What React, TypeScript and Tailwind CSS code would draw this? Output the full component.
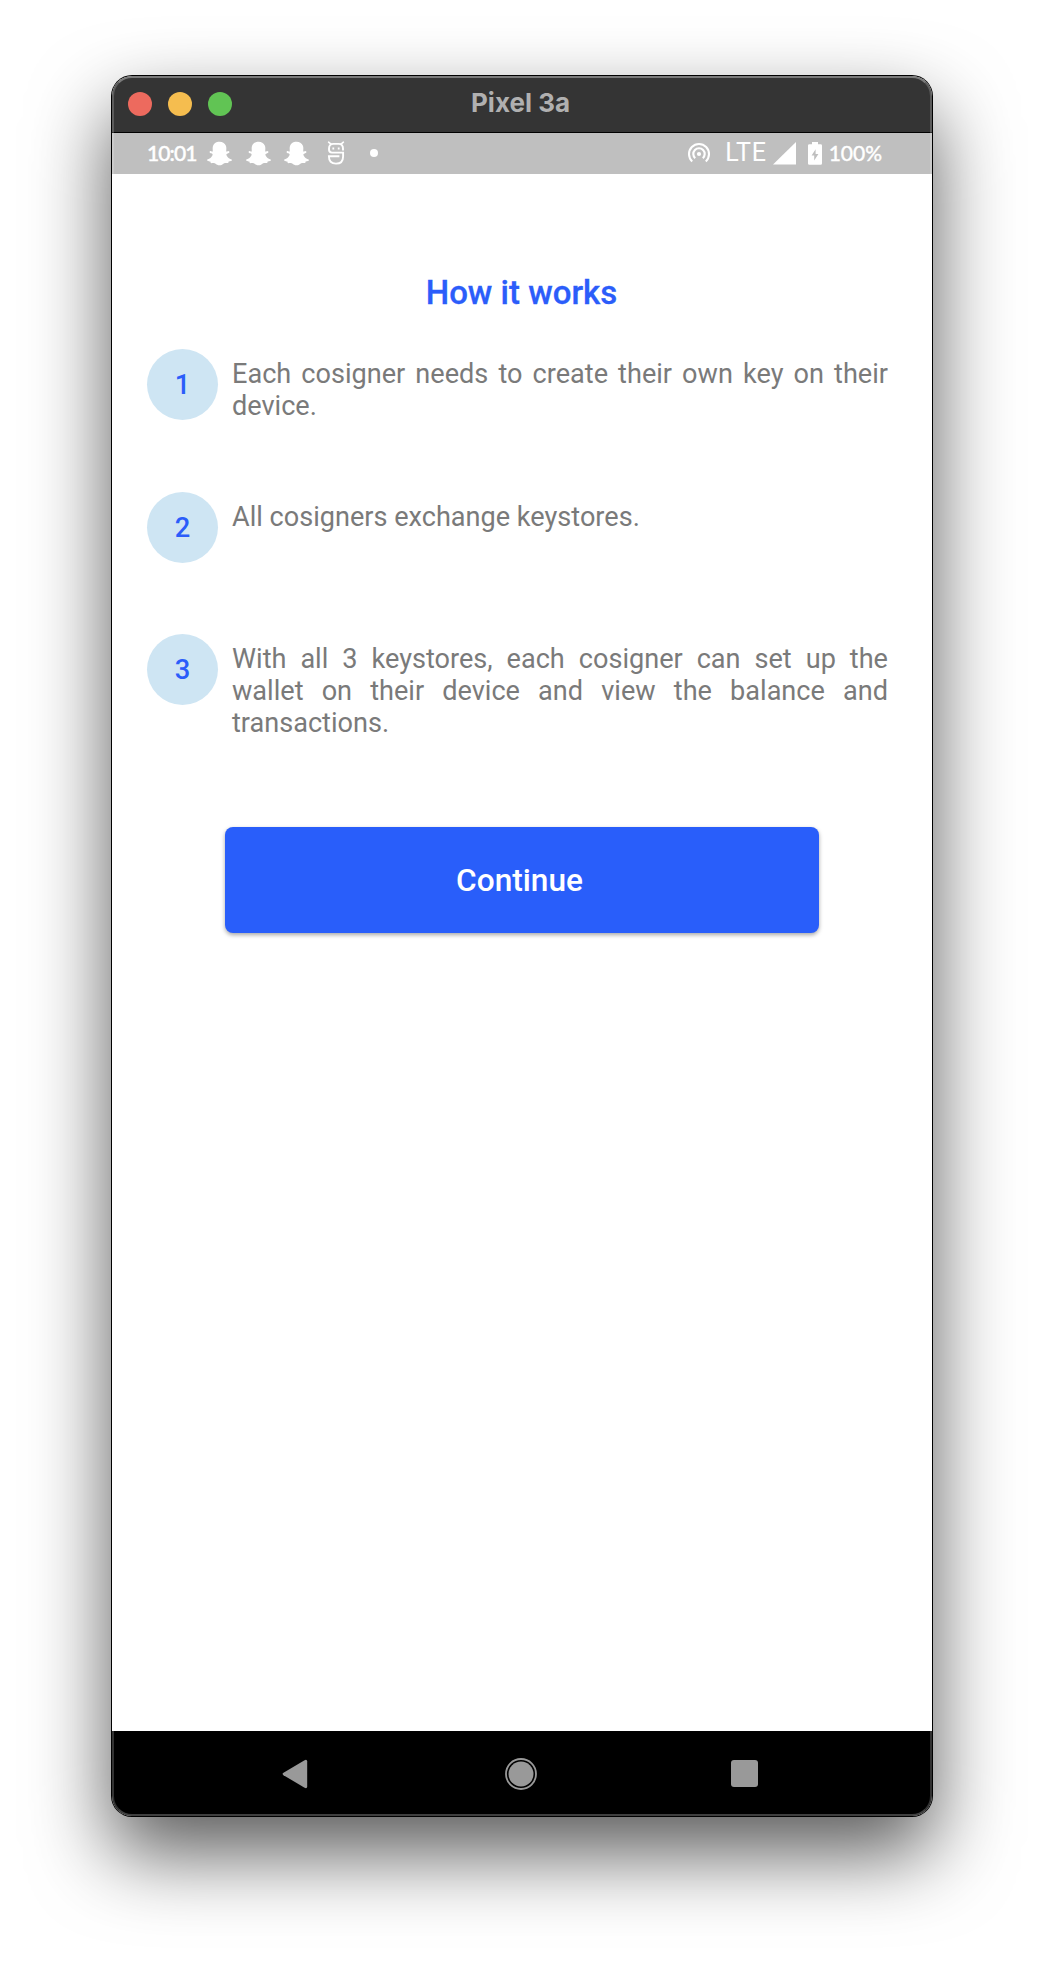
import type { ReactNode } from "react";
import { FaSnapchatGhost } from "react-icons/fa";

function MascotIcon() {
  return (
    <svg viewBox="0 0 18 24" className="h-6 w-[18px]" fill="none" stroke="white" strokeWidth="1.9">
      <path d="M1.6 1.2 4 3.2M16.4 1.2 14 3.2" strokeLinecap="round" strokeWidth="1.6" />
      <path d="M16 9.4V7.6Q16 2.9 11.6 2.9H6.4Q2 2.9 2 7.6V8.6Q2 11.6 5 11.6H16.1V15.4Q16.1 22.6 9 22.6Q1.9 22.6 1.9 15.2H12.4" />
      <path d="M6.3 6.6v2M11.7 6.6v2" strokeWidth="1.8" />
    </svg>
  );
}

function TetherIcon() {
  return (
    <svg viewBox="0 0 24 22" className="h-[22px] w-6" fill="none" stroke="white" strokeWidth="2.1">
      <path d="M5.2 19.4A10 10 0 1 1 18.8 19.4" />
      <path d="M8.2 16.2A5.7 5.7 0 1 1 15.8 16.2" />
      <circle cx="12" cy="12" r="2.1" fill="white" stroke="none" />
    </svg>
  );
}

function SignalIcon() {
  return (
    <svg viewBox="0 0 23 23" className="h-[23px] w-[23px]" fill="white">
      <path d="M23 0V22.5H0Z" />
    </svg>
  );
}

function BatteryIcon() {
  return (
    <svg viewBox="0 0 14 23" className="h-[23px] w-3.5" fill="white">
      <path
        fillRule="evenodd"
        d="M4 0H10V2.2H12.6Q14 2.2 14 3.6V21.4Q14 22.8 12.6 22.8H1.4Q0 22.8 0 21.4V3.6Q0 2.2 1.4 2.2H4ZM7.6 7.2 3.6 13.6H6.2V18.6L10.4 12H7.6Z"
      />
    </svg>
  );
}

function Step({ number, children, height }: { number: number; children: ReactNode; height: string }) {
  return (
    <li className={`flex items-start ${height}`}>
      <span className="flex size-[71px] shrink-0 items-center justify-center rounded-full bg-[#cee5f3] pt-0.5 text-[27.3px] font-medium text-[#2b5dfa]">
        {number}
      </span>
      <p className="ml-3.5 w-[656px] pt-[9px] text-justify text-[27.1px] leading-[32px] text-[#7a7a7a]">
        {children}
      </p>
    </li>
  );
}

export default function App() {
  return (
    <div className="h-[1964px] w-[1044px] overflow-hidden bg-white px-[111px] pt-[75px] font-['Roboto',sans-serif]">
      <div className="relative h-[1742px] w-[822px] rounded-[21px] bg-black p-px shadow-[0_36px_80px_rgba(0,0,0,0.65)]">
        <div className="flex h-full flex-col overflow-hidden rounded-[20px] bg-white">
          <header className="grid h-[57px] shrink-0 grid-cols-[1fr_auto_1fr] items-center border-b border-black bg-[#343434]">
            <div className="flex gap-4 pl-4">
              <span className="size-6 rounded-full bg-[#ed6a5e]" />
              <span className="size-6 rounded-full bg-[#f5bd4f]" />
              <span className="size-6 rounded-full bg-[#61c454]" />
            </div>
            <h1 className="pr-[3px] pb-1 font-['Inter',sans-serif] text-[26px] font-bold text-[#b0b0b0]">Pixel 3a</h1>
          </header>

          <div className="flex h-[41px] shrink-0 items-center bg-[#bfbfbf] pr-[50px] pb-px pl-[35px] font-['Lato',sans-serif] text-[21px] text-white">
            <span className="w-[50px] font-medium tracking-[-0.9px] whitespace-nowrap [-webkit-text-stroke:0.4px]">10:01</span>
            <div className="ml-[10px] flex items-center gap-[13.6px]">
              <FaSnapchatGhost size={25} />
              <FaSnapchatGhost size={25} />
              <FaSnapchatGhost size={25} />
            </div>
            <div className="ml-[18px] flex items-center gap-[25px]">
              <MascotIcon />
              <span className="size-2 rounded-full bg-white" />
            </div>
            <div className="ml-auto flex items-center">
              <TetherIcon />
              <span className="ml-3.5 font-['Roboto',sans-serif] text-[25px] tracking-[0.7px]">LTE</span>
              <span className="ml-[6px]"><SignalIcon /></span>
              <span className="ml-3"><BatteryIcon /></span>
              <span className="ml-[7px] [-webkit-text-stroke:0.4px]">100%</span>
            </div>
          </div>

          <main className="flex flex-1 flex-col pt-[99px]">
            <h2 className="pr-px text-center text-[33px] leading-[40px] font-medium text-[#2b5dfa] [-webkit-text-stroke:0.3px]">How it works</h2>
            <ol className="mt-[35.5px] pl-[35px]">
              <Step number={1} height="h-[143.5px]">Each cosigner needs to create their own key on their device.</Step>
              <Step number={2} height="h-[142px]">All cosigners exchange keystores.</Step>
              <Step number={3} height="h-[193px]">
                With all 3 keystores, each cosigner can set up the wallet on their device and view the balance and transactions.
              </Step>
            </ol>
            <button className="ml-[113px] h-[106px] w-[594px] rounded-lg bg-[#295efa] pt-0.5 pr-[5px] text-[31.6px] font-medium text-white shadow-[0_2px_4px_rgba(0,0,0,0.35)]">
              Continue
            </button>
          </main>

          <nav className="flex h-[85px] shrink-0 items-center bg-black pl-[170px] text-[#999]">
            <svg viewBox="0 0 26 30" className="h-[30px] w-[26px]" fill="currentColor">
              <path d="M22.6 1.3Q25 0 25.2 2.6V27.4Q25 30 22.6 28.7L1.5 16.2Q-.3 15 1.5 13.8Z" />
            </svg>
            <svg viewBox="0 0 34 34" className="ml-[196px] size-[34px]">
              <circle cx="17" cy="17" r="15" fill="none" stroke="currentColor" strokeWidth="1.8" />
              <circle cx="17" cy="17" r="12.5" fill="currentColor" />
            </svg>
            <span className="ml-[193px] size-[27px] rounded-[3px] bg-[#999]" />
          </nav>
        </div>
        <div className="pointer-events-none absolute inset-px rounded-[20px] border-2 border-t-white/35 border-r-white/20 border-b-white/25 border-l-white/20" />
      </div>
    </div>
  );
}
